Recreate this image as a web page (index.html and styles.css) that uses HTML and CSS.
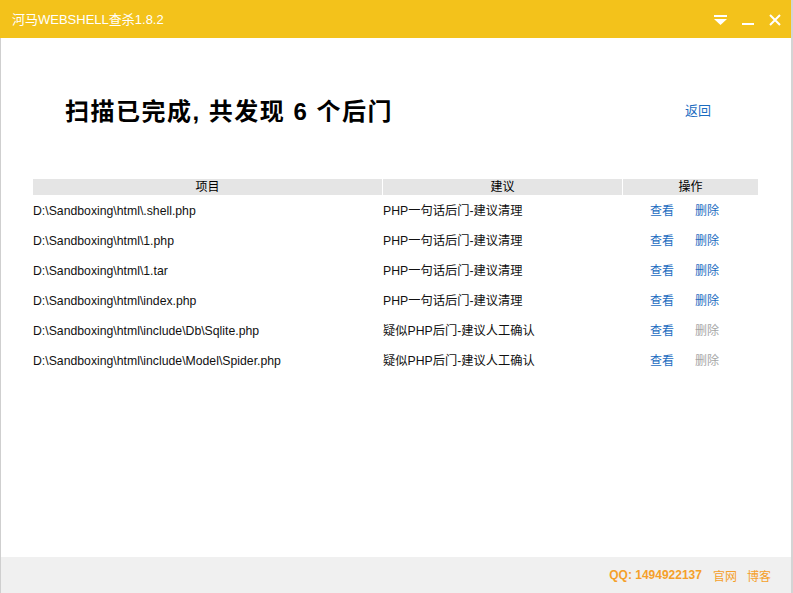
FILE: index.html
```html
<!DOCTYPE html>
<html lang="zh-CN">
<head>
<meta charset="utf-8">
<title>河马WEBSHELL查杀1.8.2</title>
<link rel="stylesheet" href="styles.css">
</head>
<body>
<div class="app">
  <header class="titlebar">
    <span class="title">河马WEBSHELL查杀1.8.2</span>
    <div class="controls">
      <svg class="ctl" width="13" height="10" viewBox="0 0 13 10"><rect x="0" y="0" width="13" height="2" fill="#fff"/><path d="M0 4 H13 L6.5 10 Z" fill="#fff"/></svg>
      <svg class="ctl" width="12" height="12" viewBox="0 0 12 12"><rect x="0" y="9" width="12" height="2" fill="#fff"/></svg>
      <svg class="ctl" width="12" height="12" viewBox="0 0 12 12"><path d="M1 1 L11 11 M11 1 L1 11" stroke="#fff" stroke-width="2"/></svg>
    </div>
  </header>
  <main class="content">
    <div class="summary">
      <h1 class="headline">扫描已完成, 共发现 <b class="count">6</b> 个后门</h1>
      <a class="back" href="#">返回</a>
    </div>
    <div class="table">
      <div class="th">项目</div>
      <div class="th">建议</div>
      <div class="th">操作</div>

      <div class="td">D:\Sandboxing\html\.shell.php</div>
      <div class="td">PHP一句话后门-建议清理</div>
      <div class="td ops"><a class="op">查看</a><a class="op">删除</a></div>

      <div class="td">D:\Sandboxing\html\1.php</div>
      <div class="td">PHP一句话后门-建议清理</div>
      <div class="td ops"><a class="op">查看</a><a class="op">删除</a></div>

      <div class="td">D:\Sandboxing\html\1.tar</div>
      <div class="td">PHP一句话后门-建议清理</div>
      <div class="td ops"><a class="op">查看</a><a class="op">删除</a></div>

      <div class="td">D:\Sandboxing\html\index.php</div>
      <div class="td">PHP一句话后门-建议清理</div>
      <div class="td ops"><a class="op">查看</a><a class="op">删除</a></div>

      <div class="td">D:\Sandboxing\html\include\Db\Sqlite.php</div>
      <div class="td">疑似PHP后门-建议人工确认</div>
      <div class="td ops"><a class="op">查看</a><a class="op disabled">删除</a></div>

      <div class="td">D:\Sandboxing\html\include\Model\Spider.php</div>
      <div class="td">疑似PHP后门-建议人工确认</div>
      <div class="td ops"><a class="op">查看</a><a class="op disabled">删除</a></div>
    </div>
  </main>
  <footer class="footer">
    <span class="qq">QQ: 1494922137</span>
    <a class="flink" href="#">官网</a>
    <a class="flink" href="#">博客</a>
  </footer>
</div>
</body>
</html>
```

FILE: styles.css
```css
html, body {
  margin: 0;
  padding: 0;
  background: #fff;
}
body {
  font-family: "Liberation Sans", Arial, "Noto Sans CJK SC", sans-serif;
  font-size: 12px;
  color: #000;
}
.app {
  width: 793px;
  height: 593px;
  display: flex;
  flex-direction: column;
  box-sizing: border-box;
  border-right: 2px solid #d4d4d4;
}
.titlebar {
  height: 38px;
  flex: none;
  background: #f3c21b;
  display: flex;
  align-items: center;
  justify-content: space-between;
  padding: 0 10px 0 12px;
}
.title {
  color: #fff;
  font-size: 13px;
  margin-top: -1px;
}
.controls {
  display: flex;
  align-items: center;
  gap: 15px;
  margin-top: 1px;
}
.ctl { display: block; }
.content {
  flex: 1;
  border-left: 1px solid #cfcfcf;
  padding: 0 0 0 32px;
}
.summary {
  display: flex;
  align-items: center;
  height: 72px;
  margin-top: 35px;
  padding-left: 32px;
}
.headline {
  margin: 0;
  font-family: "Liberation Sans", Arial, "Noto Sans CJK SC", sans-serif;
  font-size: 24px;
  font-weight: bold;
  width: 620px;
  letter-spacing: 1.5px;
}
.count { font-weight: bold; }
.back {
  color: #1c6cbf;
  text-decoration: none;
  font-size: 13px;
  margin-top: 1px;
}
.table {
  margin-top: 34px;
  width: 725px;
  display: grid;
  grid-template-columns: 349px 239px 135px;
  column-gap: 1px;
}
.th {
  background: #e5e5e5;
  height: 16px;
  line-height: 16px;
  text-align: center;
  font-size: 12px;
  margin-bottom: 1px;
}
.td {
  height: 30px;
  line-height: 30px;
  white-space: nowrap;
  font-size: 12.25px;
  color: #111;
}
.ops {
  padding-left: 27px;
  display: flex;
  gap: 21px;
  font-size: 12px;
}
.op {
  color: #1c6cbf;
  cursor: pointer;
}
.op.disabled { color: #a6a6a6; }
.footer {
  height: 36px;
  flex: none;
  background: #f0f0f0;
  border-left: 1px solid #cfcfcf;
  display: flex;
  align-items: center;
  justify-content: flex-end;
  padding-right: 20px;
  gap: 10px;
  font-size: 12px;
  color: #f5a02a;
}
.qq { font-weight: bold; margin-right: 1px; }
.flink { color: #f5a02a; text-decoration: none; }
```
